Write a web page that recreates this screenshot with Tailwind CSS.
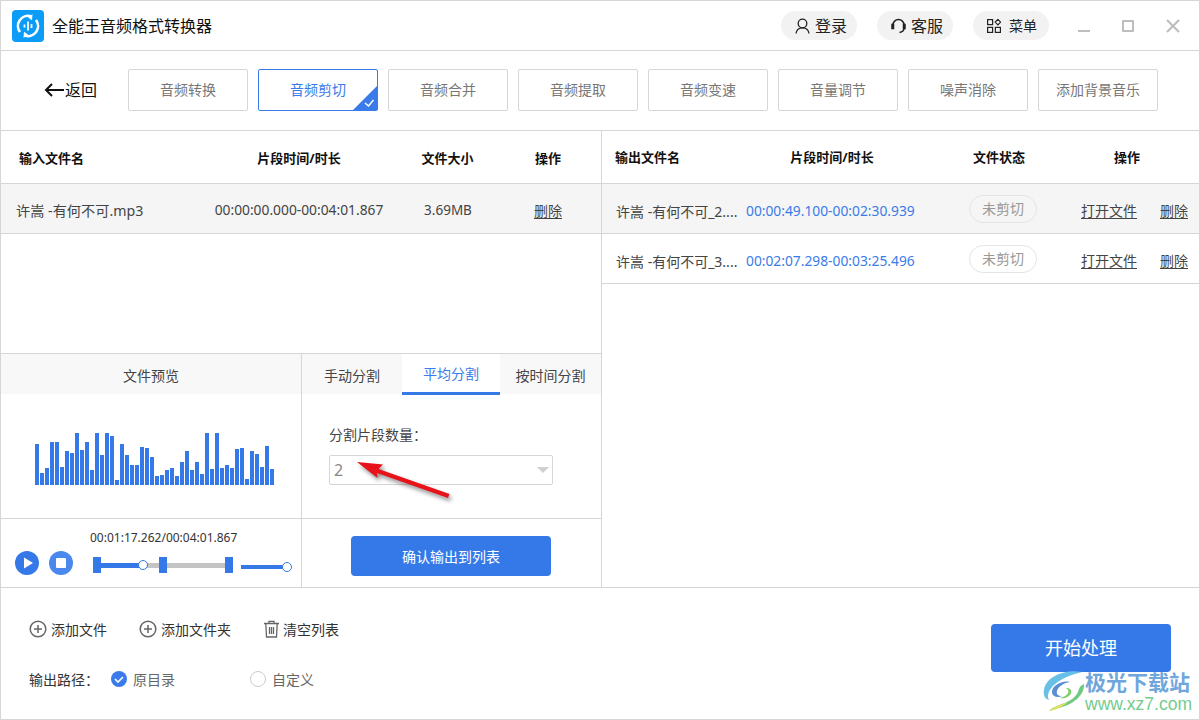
<!DOCTYPE html>
<html lang="zh-CN"><head>
<meta charset="utf-8"/>
<meta content="width=device-width, initial-scale=1.0" name="viewport"/>
<title>全能王音频格式转换器</title>
<script src="https://cdn.jsdelivr.net/npm/@tailwindcss/browser@4"></script>
</head>
<body class="bg-white">
<div class="relative w-[1200px] h-[720px] overflow-hidden border border-[#d6d6d6] bg-white text-[14px] text-[#333] font-['Noto_Sans','Noto_Sans_CJK_SC',sans-serif]">

<!-- title bar -->
<header class="flex items-center h-[50px] border-b border-[#d6d6d6]">
  <div class="ml-[11px] w-[32px] h-[32px] rounded-[4px] bg-[#0b9cf8] flex items-center justify-center">
    <svg class="w-[26px] h-[26px]" viewBox="0 0 26 26" fill="none" stroke="#fff" stroke-width="2.6">
      <path d="M5 19A10 10 0 0 1 16 3.4"/>
      <path d="M21 7A10 10 0 0 1 10 22.6"/>
      <path d="M17.5 1L13 4.6l4 2.6z" fill="#fff" stroke="none"/>
      <path d="M8.5 25l4.5-3.6-4-2.6z" fill="#fff" stroke="none"/>
      <path d="M9.5 11.5v3M13 8.5v9M16.5 11v4" stroke-width="1.8"/>
    </svg>
  </div>
  <div class="ml-[8px] text-[16px] text-[#111]">全能王音频格式转换器</div>
  <div class="ml-auto flex items-center gap-[20px]">
    <div class="w-[76px] h-[29px] rounded-full bg-[#f2f2f2] flex items-center pl-[14px] gap-[5px] text-[16px] text-[#222]">
      <svg class="w-[15px] h-[16px]" viewBox="0 0 15 16" fill="none" stroke="#222" stroke-width="1.3"><circle cx="7.5" cy="5.5" r="4.3"/><path d="M1 15.5c.6-3.6 3-5.6 6.5-5.6s5.900 2 6.500 5.600"/></svg>
      <span>登录</span>
    </div>
    <div class="w-[76px] h-[29px] rounded-full bg-[#f2f2f2] flex items-center pl-[14px] gap-[5px] text-[16px] text-[#222]">
      <svg class="w-[15px] h-[16px]" viewBox="0 0 15 16" fill="none" stroke="#222" stroke-width="1.5"><path d="M2 10V7a5.500 5.500 0 0 1 11 0v3"/><path d="M13 10c0 2.500-1.500 4-4.500 4.500"/><rect x="1" y="6.500" width="1.500" height="4" fill="#222"/><rect x="12.500" y="6.500" width="1.500" height="4" fill="#222"/></svg>
      <span>客服</span>
    </div>
    <div class="w-[76px] h-[29px] rounded-full bg-[#f2f2f2] flex items-center pl-[14px] gap-[8px] text-[14px] text-[#222]">
      <svg class="w-[14px] h-[14px]" viewBox="0 0 14 14" fill="none" stroke="#222" stroke-width="1.200"><rect x=".6" y=".6" width="5" height="5"/><rect x=".6" y="8.400" width="5" height="5"/><rect x="8.400" y="8.400" width="5" height="5"/><path d="M10.900 .4l2.700 2.700-2.700 2.700-2.700-2.700z"/></svg>
      <span>菜单</span>
    </div>
  </div>
  <div class="ml-[29px] mr-[19px] flex items-center gap-[32px]">
    <div class="w-[12px] h-[12px] flex items-end"><div class="w-[12px] h-[2px] bg-[#bdbdbd]"></div></div>
    <div class="w-[12px] h-[12px] border-2 border-[#bdbdbd] rounded-[1px]"></div>
    <svg class="w-[14px] h-[14px]" viewBox="0 0 14 14" stroke="#bdbdbd" stroke-width="2"><path d="M1 1l12 12M13 1L1 13"/></svg>
  </div>
</header>

<!-- function toolbar -->
<nav class="flex items-center h-[80px] pb-[2px] border-b border-[#d6d6d6] text-[#777]">
  <div class="w-[127px] flex items-center pl-[43px] text-[16px] text-[#111]">
    <svg class="w-[21px] h-[14px]" viewBox="0 0 21 14" fill="none" stroke="#111" stroke-width="2"><path d="M20 7H2.500M8 1L2 7l6 6"/></svg>
    <span>返回</span>
  </div>
  <div class="flex gap-[10px]">
    <div class="w-[120px] h-[42px] border border-[#d6d6d6] rounded-[2px] flex items-center justify-center">音频转换</div>
    <div class="relative w-[120px] h-[42px] border border-[#3a7bea] rounded-[2px] flex items-center justify-center text-[#3a7bea]">音频剪切
      <svg class="absolute right-0 bottom-0 w-[24px] h-[24px]" viewBox="0 0 24 24"><path d="M24 0v24H0z" fill="#3a7bea"/><path d="M12 17l3.500 3 5-6" fill="none" stroke="#fff" stroke-width="1.500"/></svg>
    </div>
    <div class="w-[120px] h-[42px] border border-[#d6d6d6] rounded-[2px] flex items-center justify-center">音频合并</div>
    <div class="w-[120px] h-[42px] border border-[#d6d6d6] rounded-[2px] flex items-center justify-center">音频提取</div>
    <div class="w-[120px] h-[42px] border border-[#d6d6d6] rounded-[2px] flex items-center justify-center">音频变速</div>
    <div class="w-[120px] h-[42px] border border-[#d6d6d6] rounded-[2px] flex items-center justify-center">音量调节</div>
    <div class="w-[120px] h-[42px] border border-[#d6d6d6] rounded-[2px] flex items-center justify-center">噪声消除</div>
    <div class="w-[120px] h-[42px] border border-[#d6d6d6] rounded-[2px] flex items-center justify-center">添加背景音乐</div>
  </div>
</nav>

<main class="flex h-[457px] border-b border-[#d6d6d6]">
  <!-- left: input list + preview + split -->
  <section class="w-[601px] border-r border-[#d6d6d6] flex flex-col">
    <div class="h-[223px] border-b border-[#d6d6d6]">
      <div class="flex items-center h-[53px] pt-[3px] border-b border-[#d6d6d6] text-[13px] font-bold text-[#111]">
        <div class="w-[218px] pl-[18px]">输入文件名</div>
        <div class="w-[160px] text-center">片段时间/时长</div>
        <div class="w-[137px] text-center">文件大小</div>
        <div class="w-[64px] text-center">操作</div>
      </div>
      <div class="flex items-center h-[50px] pt-[4px] border-b border-[#d6d6d6] bg-[#f5f5f5] text-[#444]">
        <div class="w-[199px] pl-[15px] text-[14.200px]">许嵩 -有何不可.mp3</div>
        <div class="w-[198px] text-center text-[13.800px]">00:00:00.000-00:04:01.867</div>
        <div class="w-[100px] text-center text-[13.500px]">3.69MB</div>
        <div class="w-[100px] text-center underline underline-offset-2">删除</div>
      </div>
    </div>
    <div class="flex flex-1">
      <div class="w-[301px] border-r border-[#d6d6d6] flex flex-col">
        <div class="h-[165px] border-b border-[#d6d6d6]">
          <div class="h-[40px] pt-[3px] bg-[#f8f8f8] flex items-center justify-center text-[#444]">文件预览</div>
          <div id="wave" class="flex items-end gap-px h-[52px] ml-[34px] mt-[39px]">
            <div class="w-[4px] bg-[#3579e9]" style="height:41px"></div><div class="w-[4px] bg-[#3579e9]" style="height:12px"></div><div class="w-[4px] bg-[#3579e9]" style="height:17px"></div><div class="w-[4px] bg-[#3579e9]" style="height:43px"></div><div class="w-[4px] bg-[#3579e9]" style="height:43px"></div><div class="w-[4px] bg-[#3579e9]" style="height:18px"></div><div class="w-[4px] bg-[#3579e9]" style="height:34px"></div><div class="w-[4px] bg-[#3579e9]" style="height:32px"></div><div class="w-[4px] bg-[#3579e9]" style="height:52px"></div><div class="w-[4px] bg-[#3579e9]" style="height:35px"></div><div class="w-[4px] bg-[#3579e9]" style="height:43px"></div><div class="w-[4px] bg-[#3579e9]" style="height:15px"></div><div class="w-[4px] bg-[#3579e9]" style="height:52px"></div><div class="w-[4px] bg-[#3579e9]" style="height:30px"></div><div class="w-[4px] bg-[#3579e9]" style="height:52px"></div><div class="w-[4px] bg-[#3579e9]" style="height:49px"></div><div class="w-[4px] bg-[#3579e9]" style="height:5px"></div><div class="w-[4px] bg-[#3579e9]" style="height:41px"></div><div class="w-[4px] bg-[#3579e9]" style="height:30px"></div><div class="w-[4px] bg-[#3579e9]" style="height:20px"></div><div class="w-[4px] bg-[#3579e9]" style="height:20px"></div><div class="w-[4px] bg-[#3579e9]" style="height:38px"></div><div class="w-[4px] bg-[#3579e9]" style="height:37px"></div><div class="w-[4px] bg-[#3579e9]" style="height:28px"></div><div class="w-[4px] bg-[#3579e9]" style="height:9px"></div><div class="w-[4px] bg-[#3579e9]" style="height:10px"></div><div class="w-[4px] bg-[#3579e9]" style="height:15px"></div><div class="w-[4px] bg-[#3579e9]" style="height:17px"></div><div class="w-[4px] bg-[#3579e9]" style="height:9px"></div><div class="w-[4px] bg-[#3579e9]" style="height:23px"></div><div class="w-[4px] bg-[#3579e9]" style="height:34px"></div><div class="w-[4px] bg-[#3579e9]" style="height:15px"></div><div class="w-[4px] bg-[#3579e9]" style="height:23px"></div><div class="w-[4px] bg-[#3579e9]" style="height:11px"></div><div class="w-[4px] bg-[#3579e9]" style="height:52px"></div><div class="w-[4px] bg-[#3579e9]" style="height:16px"></div><div class="w-[4px] bg-[#3579e9]" style="height:52px"></div><div class="w-[4px] bg-[#3579e9]" style="height:17px"></div><div class="w-[4px] bg-[#3579e9]" style="height:20px"></div><div class="w-[4px] bg-[#3579e9]" style="height:17px"></div><div class="w-[4px] bg-[#3579e9]" style="height:36px"></div><div class="w-[4px] bg-[#3579e9]" style="height:37px"></div><div class="w-[4px] bg-[#3579e9]" style="height:6px"></div><div class="w-[4px] bg-[#3579e9]" style="height:34px"></div><div class="w-[4px] bg-[#3579e9]" style="height:31px"></div><div class="w-[4px] bg-[#3579e9]" style="height:18px"></div><div class="w-[4px] bg-[#3579e9]" style="height:39px"></div><div class="w-[4px] bg-[#3579e9]" style="height:16px"></div>
          </div>
        </div>
        <div class="flex-1 pl-[14px]">
          <div class="pl-[75px] pt-[10px] h-[32px] text-[12px] leading-[17px] text-[#333]">00:01:17.262/00:04:01.867</div>
          <div class="flex items-center">
            <svg class="w-[24px] h-[24px]" viewBox="0 0 24 24"><circle cx="12" cy="12" r="12" fill="#3579e9"/><path d="M9 6.500v11l9-5.500z" fill="#fff"/></svg>
            <svg class="ml-[10px] w-[24px] h-[24px]" viewBox="0 0 24 24"><circle cx="12" cy="12" r="12" fill="#4a88ee"/><rect x="7" y="7" width="10" height="10" rx="1" fill="#fff"/></svg>
            <!-- trim slider -->
            <div class="relative ml-[20px] mt-[4px] w-[140px] h-[16px] flex items-center">
              <div class="w-[8px] h-[16px] bg-[#3579e9]"></div>
              <div class="w-[42px] h-[5px] bg-[#3579e9]"></div>
              <div class="w-[82px] h-[5px] bg-[#c4c4c4]"></div>
              <div class="w-[8px] h-[16px] bg-[#3579e9]"></div>
              <div class="absolute left-[45px] top-[3px] w-[10px] h-[10px] rounded-full bg-white border border-[#3579e9]"></div>
              <div class="absolute left-[66px] top-0 w-[8px] h-[16px] bg-[#3579e9]"></div>
            </div>
            <!-- volume -->
            <div class="relative ml-[8px] mt-[8px] w-[46px] h-[4px] bg-[#3579e9]">
              <div class="absolute -right-[5px] -top-[3px] w-[10px] h-[10px] rounded-full bg-white border border-[#3579e9]"></div>
            </div>
          </div>
        </div>
      </div>
      <div class="flex-1 flex flex-col">
        <div class="h-[165px] border-b border-[#d6d6d6]">
          <div class="flex h-[41px] text-[#444]">
            <div class="w-[100px] h-[40px] bg-[#f8f8f8] flex items-center justify-center pt-[3px]">手动分割</div>
            <div class="w-[98px] border-b-[3px] border-[#3579e9] flex items-center justify-center text-[#3a7bea]">平均分割</div>
            <div class="flex-1 h-[40px] bg-[#f8f8f8] flex items-center justify-center pt-[3px]">按时间分割</div>
          </div>
          <div class="pl-[27px] pt-[30px] leading-[20px] text-[#444]">分割片段数量：</div>
          <div class="ml-[27px] mt-[10px] w-[224px] h-[30px] border border-[#d6d6d6] rounded-[2px] flex items-center justify-between pl-[4px] pr-[3px] text-[16px] text-[#888]">
            <span>2</span>
            <div class="w-0 h-0 border-x-[6px] border-x-transparent border-t-[6px] border-t-[#d0d0d0]"></div>
          </div>
        </div>
        <div class="flex-1 flex items-center justify-center pt-[6px] pr-[1px]">
          <div class="w-[200px] h-[40px] rounded-[4px] bg-[#3579e9] text-white flex items-center justify-center text-[14px]">确认输出到列表</div>
        </div>
      </div>
    </div>
  </section>

  <!-- right: output list -->
  <section class="flex-1">
    <div class="flex items-center h-[53px] pt-[2px] border-b border-[#d6d6d6] text-[13px] font-bold text-[#111]">
      <div class="w-[150px] pl-[13px]">输出文件名</div>
      <div class="w-[160px] text-center">片段时间/时长</div>
      <div class="w-[174px] text-center">文件状态</div>
      <div class="w-[82px] text-center">操作</div>
    </div>
    <div class="flex items-center h-[50px] border-b border-[#d6d6d6] bg-[#f5f5f5] text-[#444]">
      <div class="w-[141px] pl-[14px] pt-[5px] whitespace-nowrap">许嵩 -有何不可_2....</div>
      <div class="w-[175px] pl-[3px] pt-[5px] text-[13.800px] text-[#3a7bea]">00:00:49.100-00:02:30.939</div>
      <div class="ml-[51px] w-[68px] h-[28px] rounded-full border border-[#e4e4e4] flex items-center justify-center text-[#999]">未剪切</div>
      <div class="ml-[44px] pt-[3px] underline underline-offset-2">打开文件</div>
      <div class="ml-[23px] pt-[3px] underline underline-offset-2">删除</div>
    </div>
    <div class="flex items-center h-[50px] border-b border-[#d6d6d6] text-[#444]">
      <div class="w-[141px] pl-[14px] pt-[5px] whitespace-nowrap">许嵩 -有何不可_3....</div>
      <div class="w-[175px] pl-[3px] pt-[5px] text-[13.800px] text-[#3a7bea]">00:02:07.298-00:03:25.496</div>
      <div class="ml-[51px] w-[68px] h-[28px] rounded-full border border-[#e4e4e4] flex items-center justify-center text-[#999]">未剪切</div>
      <div class="ml-[44px] pt-[3px] underline underline-offset-2">打开文件</div>
      <div class="ml-[23px] pt-[3px] underline underline-offset-2">删除</div>
    </div>
  </section>
</main>

<!-- bottom bar -->
<footer class="relative flex justify-between h-[131px]">
  <div class="pl-[28px] pt-[31px]">
    <div class="flex items-center h-[20px] text-[#333]">
      <svg class="w-[18px] h-[18px]" viewBox="0 0 18 18" fill="none" stroke="#666" stroke-width="1.500"><circle cx="9" cy="9" r="7.800"/><path d="M9 5v8M5 9h8"/></svg>
      <span class="ml-[4px]">添加文件</span>
      <svg class="ml-[32px] w-[18px] h-[18px]" viewBox="0 0 18 18" fill="none" stroke="#666" stroke-width="1.500"><circle cx="9" cy="9" r="7.800"/><path d="M9 5v8M5 9h8"/></svg>
      <span class="ml-[4px]">添加文件夹</span>
      <svg class="ml-[32px] w-[17px] h-[18px]" viewBox="0 0 17 18" fill="none" stroke="#666" stroke-width="1.300"><path d="M1 3.500h15M6 3.500V1.300h5v2.200M2.800 3.500l.7 13.500h10l.7-13.500M6.500 7v7M8.500 7v7M10.500 7v7"/></svg>
      <span class="ml-[3px]">清空列表</span>
    </div>
    <div class="flex items-center h-[20px] mt-[30px]">
      <span class="w-[82px] text-[#333]">输出路径：</span>
      <svg class="w-[16px] h-[16px]" viewBox="0 0 16 16"><circle cx="8" cy="8" r="8" fill="#3a7bea"/><path d="M4 8l3 3 5-5" fill="none" stroke="#fff" stroke-width="1.700"/></svg>
      <span class="ml-[6px] w-[117px] text-[#666]">原目录</span>
      <div class="w-[16px] h-[16px] rounded-full border border-[#ccc]"></div>
      <span class="ml-[6px] text-[#666]">自定义</span>
    </div>
  </div>
  <div class="mr-[28px] mt-[36px] w-[180px] h-[48px] rounded-[4px] bg-[#3579e9] text-white text-[18px] flex items-center justify-center">开始处理</div>
</footer>

<!-- red annotation arrow over the select -->
<svg class="absolute left-[350px] top-[455px] w-[110px] h-[50px] drop-shadow-[2px_3px_2px_rgba(0,0,0,0.45)]" viewBox="0 0 110 50"><path d="M6 6L32 8.500 27.500 13 98.500 38 97 42 26 17 26.500 22z" fill="#e8121a"/></svg>

<!-- watermark -->
<div class="absolute left-[1041px] top-[669px] flex items-start">
  <svg class="w-[44px] h-[42px]" viewBox="0 0 44 42" fill="none">
    <path d="M40 2C24-1 4 6 2 20c-1 5 1 9 5 10C3 24 10 9 40 2z" fill="#68bfe8"/>
    <path d="M28 12c-8-2-19 4-18 11 1 4 6 5 10 3-4 0-6-2-5-5 1-4 6-8 13-9z" fill="#5a8fd0"/>
    <path d="M42 14c1 9-8 19-22 23-6 2-11 3-13 4 8-8 26-7 30-22 1-3 3-4 5-5z" fill="#6fc97f"/>
    <path d="M24 18c4 0 6 2 5 5-1 4-7 6-11 5 4-1 7-3 8-5 1-2 0-4-2-5z" fill="#7fcf6a"/>
    <path d="M7 41c6-5 12-6 19-9-5 4-11 8-19 9z" fill="#e4e25a"/>
  </svg>
  <div class="-ml-[1px] leading-none">
    <div class="text-[21px] leading-[24px] font-bold text-[#6fa6dc]">极光下载站</div>
    <div class="text-[17.500px] leading-[20px] text-[#74cc8e] font-['Liberation_Sans',sans-serif]">www.xz7.com</div>
  </div>
</div>
</div>
</body></html>
